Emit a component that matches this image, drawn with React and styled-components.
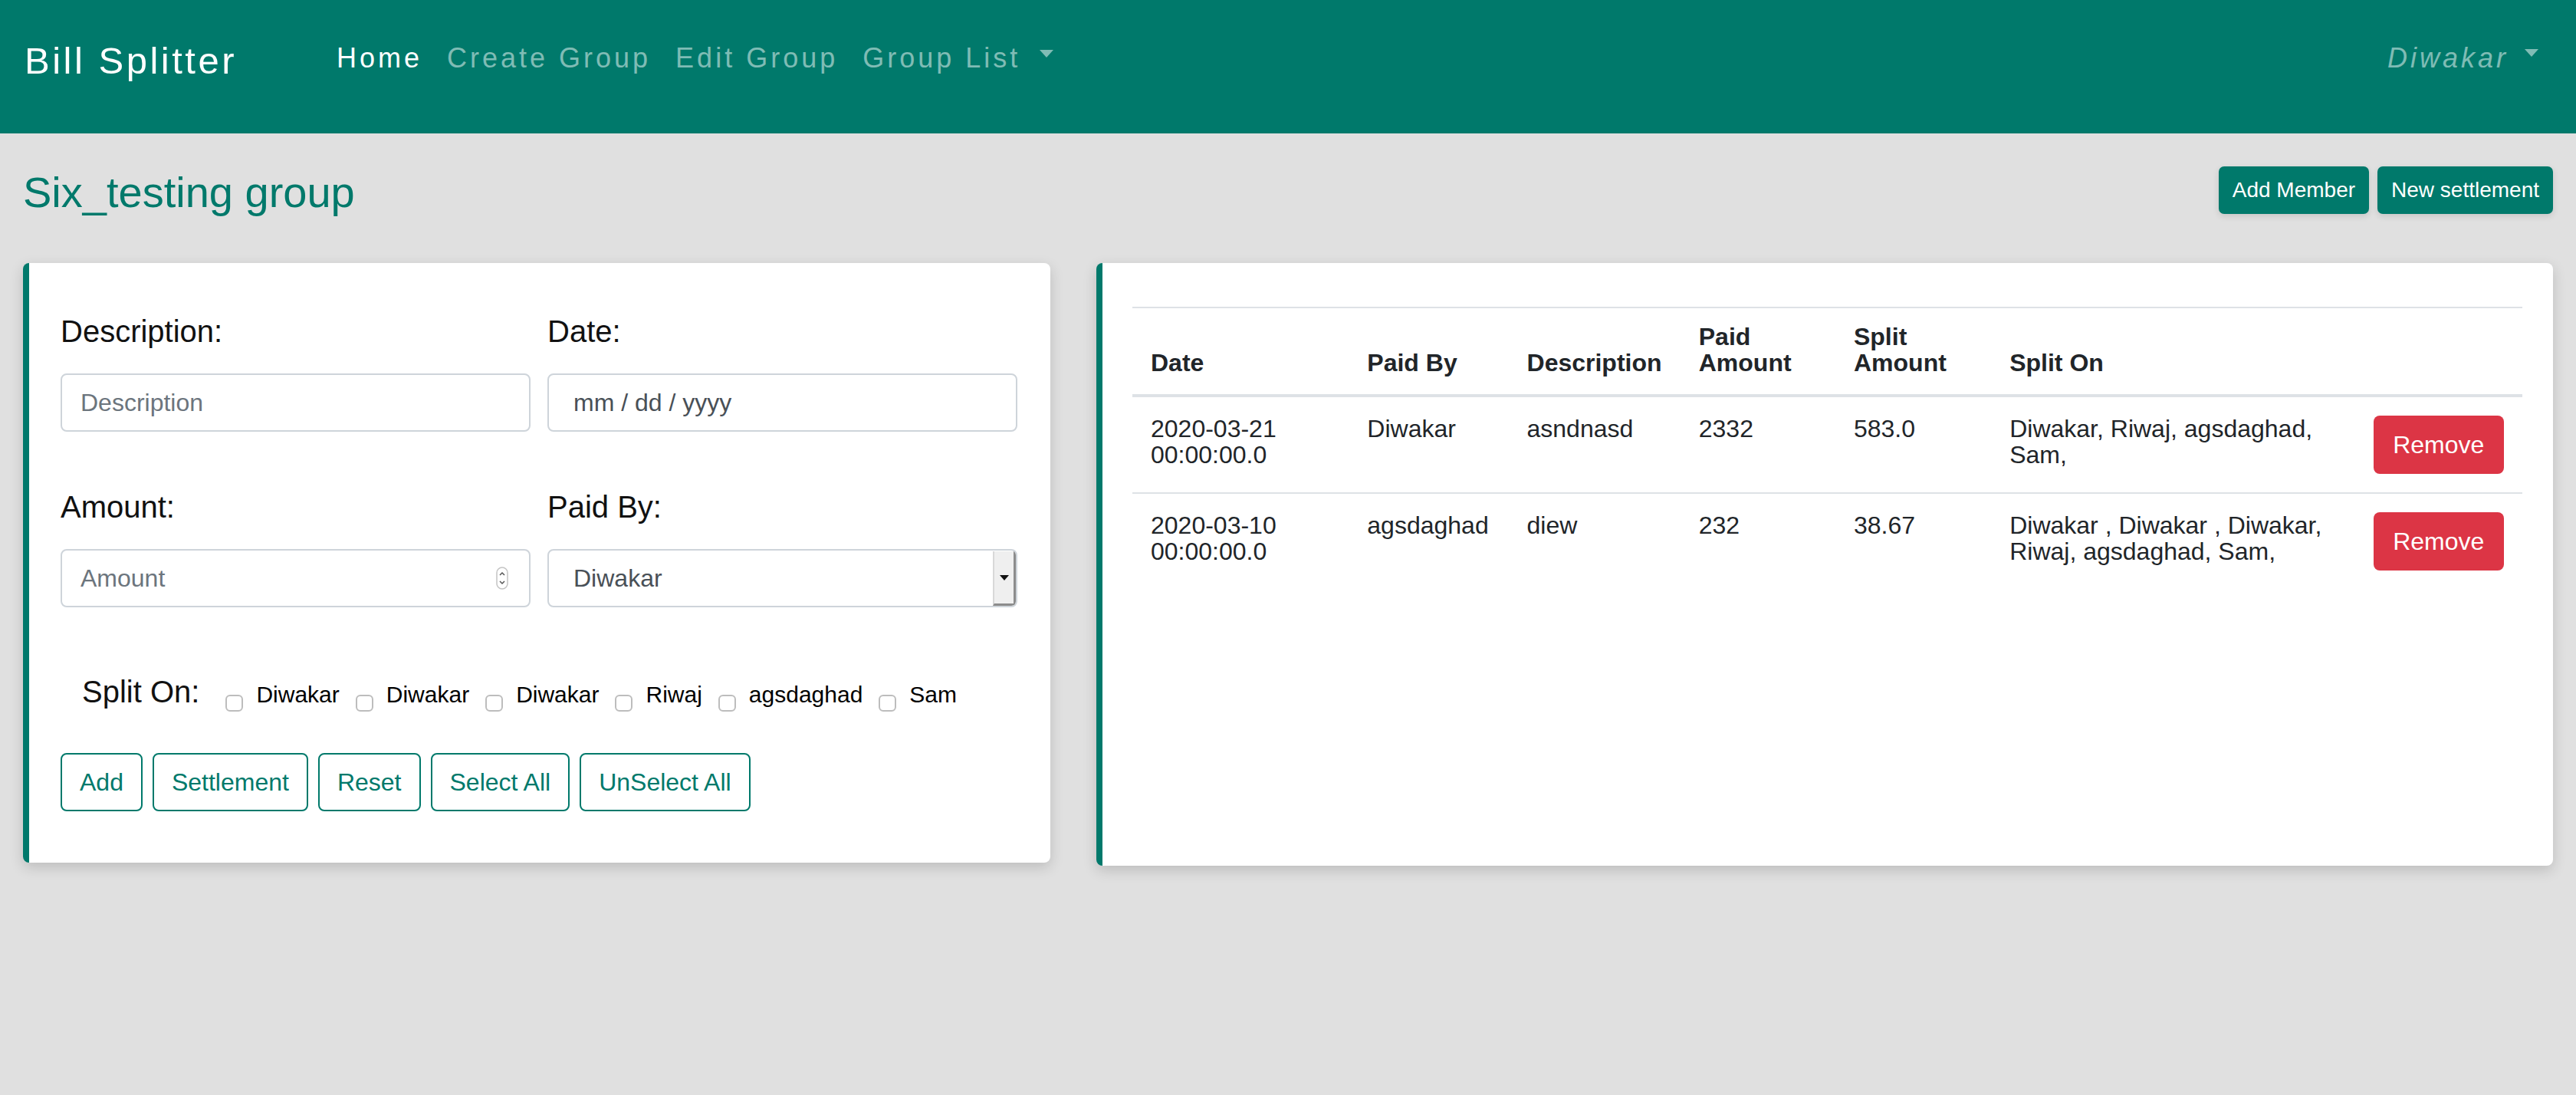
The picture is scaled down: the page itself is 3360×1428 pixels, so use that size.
import React from "react";
import styled, { createGlobalStyle } from "styled-components";

const TEAL = "#00796b";

const GlobalStyle = createGlobalStyle`
  html, body { margin: 0; padding: 0; }
  body {
    background: #e0e0e0;
    font-family: "Liberation Sans", Arial, Helvetica, sans-serif;
    color: #212529;
  }
  * { box-sizing: border-box; }
`;

const Page = styled.div`
  min-height: 1428px;
  background: #e0e0e0;
`;

/* ---------- Navbar ---------- */
const Navbar = styled.nav`
  height: 174px;
  background: ${TEAL};
  display: flex;
  align-items: flex-start;
  padding: 0 33px 0 32px;
`;

const Brand = styled.a`
  margin-top: 50px;
  margin-right: 114px;
  font-size: 49px;
  line-height: 58px;
  letter-spacing: 3.5px;
  color: #fff;
  text-decoration: none;
  white-space: nowrap;
`;

const NavList = styled.div`
  display: flex;
  margin-top: 54px;
`;

const NavLink = styled.a`
  display: inline-flex;
  align-items: flex-start;
  padding: 0 16px;
  font-size: 36px;
  line-height: 44px;
  letter-spacing: 4px;
  font-style: ${(p) => (p.$italic ? "italic" : "normal")};
  color: ${(p) => (p.$active ? "#fff" : "rgba(255,255,255,0.5)")};
  text-decoration: none;
  white-space: nowrap;
`;

const Caret = styled.span`
  display: inline-block;
  width: 0;
  height: 0;
  margin-left: ${(p) => p.$ml}px;
  margin-top: ${(p) => p.$mt}px;
  border-top: 10px solid currentColor;
  border-left: 9px solid transparent;
  border-right: 9px solid transparent;
`;

const UserMenu = styled.div`
  margin-left: auto;
  margin-top: 54px;
  display: flex;
`;

/* ---------- Header row ---------- */
const HeaderRow = styled.div`
  display: flex;
  justify-content: space-between;
  align-items: flex-start;
  padding: 43px 30px 0;
`;

const Title = styled.h3`
  margin: 0;
  font-size: 56px;
  line-height: 67px;
  font-weight: 400;
  color: ${TEAL};
`;

const ActionGroup = styled.div`
  display: flex;
  gap: 11px;
`;

const SolidButton = styled.button`
  height: 62px;
  padding: 0 16px;
  border: 2px solid ${TEAL};
  border-radius: 7px;
  background: ${TEAL};
  color: #fff;
  font-family: inherit;
  font-size: 28px;
  line-height: 42px;
  box-shadow: 0 3px 8px rgba(0, 0, 0, 0.12);
  white-space: nowrap;
`;

/* ---------- Layout ---------- */
const Columns = styled.div`
  display: grid;
  grid-template-columns: 1340px 1900px;
  column-gap: 60px;
  padding: 0 30px;
  margin-top: 59px;
  align-items: start;
`;

const Card = styled.section`
  background: #fff;
  border-left: 8px solid ${TEAL};
  border-radius: 8px;
  box-shadow: 0 6px 18px rgba(0, 0, 0, 0.16);
`;

const FormCard = styled(Card)`
  padding: 65px 43px 67px 41px;
`;

const FormGrid = styled.div`
  display: grid;
  grid-template-columns: 1fr 1fr;
  column-gap: 22px;
  row-gap: 74px;
`;

const Field = styled.div`
  display: flex;
  flex-direction: column;
`;

const Label = styled.label`
  display: block;
  font-size: 40px;
  line-height: 48px;
  margin-bottom: 31px;
  color: #111;
`;

const TextInput = styled.input`
  width: 100%;
  height: 76px;
  border: 2px solid #ced4da;
  border-radius: 8px;
  padding: 0 24px 0 ${(p) => p.$pl || 24}px;
  font-family: inherit;
  font-size: 32px;
  color: #495057;
  background: #fff;
  outline: none;
  &::placeholder {
    color: ${(p) => (p.$darkPlaceholder ? "#495057" : "#6c757d")};
  }
`;

const InputWrap = styled.div`
  position: relative;
`;

const Spinner = styled.svg`
  position: absolute;
  right: 29px;
  top: 50%;
  transform: translateY(-50%);
`;

const SelectBox = styled.div`
  height: 76px;
  display: flex;
  align-items: stretch;
  border: 2px solid #ced4da;
  border-radius: 8px;
  overflow: hidden;
  background: #fff;
`;

const SelectValue = styled.span`
  flex: 1;
  display: flex;
  align-items: center;
  padding-left: 32px;
  font-size: 32px;
  color: #495057;
`;

const SelectArrow = styled.span`
  width: 30px;
  margin: 1px 0 0;
  background: #efefef;
  border-left: 2px solid #d8d8d8;
  border-right: 3px solid #8c8c8c;
  border-bottom: 3px solid #8c8c8c;
  display: flex;
  align-items: center;
  justify-content: center;
  &::after {
    content: "";
    width: 0;
    height: 0;
    border-top: 7px solid #111;
    border-left: 6px solid transparent;
    border-right: 6px solid transparent;
  }
`;

const SplitRow = styled.div`
  display: flex;
  align-items: flex-start;
  margin-top: 86px;
  padding-left: 28px;
`;

const SplitLabel = styled.span`
  font-size: 40px;
  line-height: 48px;
  margin-right: 34px;
  color: #111;
  white-space: nowrap;
`;

const CheckItem = styled.label`
  display: flex;
  align-items: flex-start;
  margin-top: 11px;
  margin-right: 21px;
`;

const Checkbox = styled.input.attrs({ type: "checkbox" })`
  appearance: none;
  -webkit-appearance: none;
  width: 23px;
  height: 22px;
  margin: 17px 17px 0 0;
  border: 2px solid #bdbdbd;
  border-radius: 6px;
  background: #fff;
`;

const CheckText = styled.span`
  font-size: 30px;
  line-height: 34px;
  color: #000;
  white-space: nowrap;
`;

const ButtonRow = styled.div`
  display: flex;
  gap: 13px;
  margin-top: 54px;
`;

const OutlineButton = styled.button`
  height: 76px;
  padding: 0 23px;
  border: 2px solid ${TEAL};
  border-radius: 8px;
  background: #fff;
  color: ${TEAL};
  font-family: inherit;
  font-size: 32px;
  white-space: nowrap;
`;

/* ---------- Table ---------- */
const TableCard = styled(Card)`
  height: 786px;
  padding: 57px 40px 0 39px;
`;

const Table = styled.table`
  width: 100%;
  border-collapse: collapse;
  table-layout: fixed;
  font-size: 32px;
  line-height: 34px;
  color: #212529;
`;

const Th = styled.th`
  text-align: left;
  vertical-align: bottom;
  padding: 20px 24px 24px;
  border-top: 2px solid #dee2e6;
  border-bottom: 4px solid #dee2e6;
  font-weight: 700;
`;

const Td = styled.td`
  vertical-align: top;
  padding: 24px;
  border-top: 2px solid #dee2e6;
`;

const RemoveButton = styled.button`
  width: 170px;
  height: 76px;
  border: none;
  border-radius: 8px;
  background: #dc3545;
  color: #fff;
  font-family: inherit;
  font-size: 32px;
`;

const columns = [282, 208, 224, 202, 203, 474, 218];

const rows = [
  {
    date: "2020-03-21 00:00:00.0",
    paidBy: "Diwakar",
    desc: "asndnasd",
    paid: "2332",
    split: "583.0",
    on: "Diwakar, Riwaj, agsdaghad, Sam,",
  },
  {
    date: "2020-03-10 00:00:00.0",
    paidBy: "agsdaghad",
    desc: "diew",
    paid: "232",
    split: "38.67",
    on: "Diwakar , Diwakar , Diwakar, Riwaj, agsdaghad, Sam,",
  },
];

const members = ["Diwakar", "Diwakar", "Diwakar", "Riwaj", "agsdaghad", "Sam"];

function AmountSpinner() {
  return (
    <Spinner width="16" height="30" viewBox="0 0 16 30">
      <rect x="1" y="1" width="14" height="28" rx="7" fill="#fff" stroke="#c4c4c4" strokeWidth="1.5" />
      <path d="M5 11 L8 8 L11 11" fill="none" stroke="#555" strokeWidth="1.5" />
      <path d="M5 19 L8 22 L11 19" fill="none" stroke="#555" strokeWidth="1.5" />
    </Spinner>
  );
}

export default function App() {
  return (
    <Page>
      <GlobalStyle />
      <Navbar>
        <Brand>Bill Splitter</Brand>
        <NavList>
          <NavLink $active>Home</NavLink>
          <NavLink>Create Group</NavLink>
          <NavLink>Edit Group</NavLink>
          <NavLink>
            Group List
            <Caret $ml={25} $mt={11} />
          </NavLink>
        </NavList>
        <UserMenu>
          <NavLink $italic>
            Diwakar
            <Caret $ml={21} $mt={10} />
          </NavLink>
        </UserMenu>
      </Navbar>

      <HeaderRow>
        <Title>Six_testing group</Title>
        <ActionGroup>
          <SolidButton>Add Member</SolidButton>
          <SolidButton>New settlement</SolidButton>
        </ActionGroup>
      </HeaderRow>

      <Columns>
        <FormCard>
          <FormGrid>
            <Field>
              <Label>Description:</Label>
              <TextInput placeholder="Description" />
            </Field>
            <Field>
              <Label>Date:</Label>
              <TextInput placeholder="mm / dd / yyyy" $darkPlaceholder $pl={32} />
            </Field>
            <Field>
              <Label>Amount:</Label>
              <InputWrap>
                <TextInput placeholder="Amount" />
                <AmountSpinner />
              </InputWrap>
            </Field>
            <Field>
              <Label>Paid By:</Label>
              <SelectBox>
                <SelectValue>Diwakar</SelectValue>
                <SelectArrow />
              </SelectBox>
            </Field>
          </FormGrid>

          <SplitRow>
            <SplitLabel>Split On:</SplitLabel>
            {members.map((m, i) => (
              <CheckItem key={i}>
                <Checkbox />
                <CheckText>{m}</CheckText>
              </CheckItem>
            ))}
          </SplitRow>

          <ButtonRow>
            <OutlineButton>Add</OutlineButton>
            <OutlineButton>Settlement</OutlineButton>
            <OutlineButton>Reset</OutlineButton>
            <OutlineButton>Select All</OutlineButton>
            <OutlineButton>UnSelect All</OutlineButton>
          </ButtonRow>
        </FormCard>

        <TableCard>
          <Table>
            <colgroup>
              {columns.map((w, i) => (
                <col key={i} style={{ width: w }} />
              ))}
            </colgroup>
            <thead>
              <tr>
                <Th>Date</Th>
                <Th>Paid By</Th>
                <Th>Description</Th>
                <Th>Paid Amount</Th>
                <Th>Split Amount</Th>
                <Th>Split On</Th>
                <Th></Th>
              </tr>
            </thead>
            <tbody>
              {rows.map((r, i) => (
                <tr key={i}>
                  <Td>{r.date}</Td>
                  <Td>{r.paidBy}</Td>
                  <Td>{r.desc}</Td>
                  <Td>{r.paid}</Td>
                  <Td>{r.split}</Td>
                  <Td>{r.on}</Td>
                  <Td>
                    <RemoveButton>Remove</RemoveButton>
                  </Td>
                </tr>
              ))}
            </tbody>
          </Table>
        </TableCard>
      </Columns>
    </Page>
  );
}
